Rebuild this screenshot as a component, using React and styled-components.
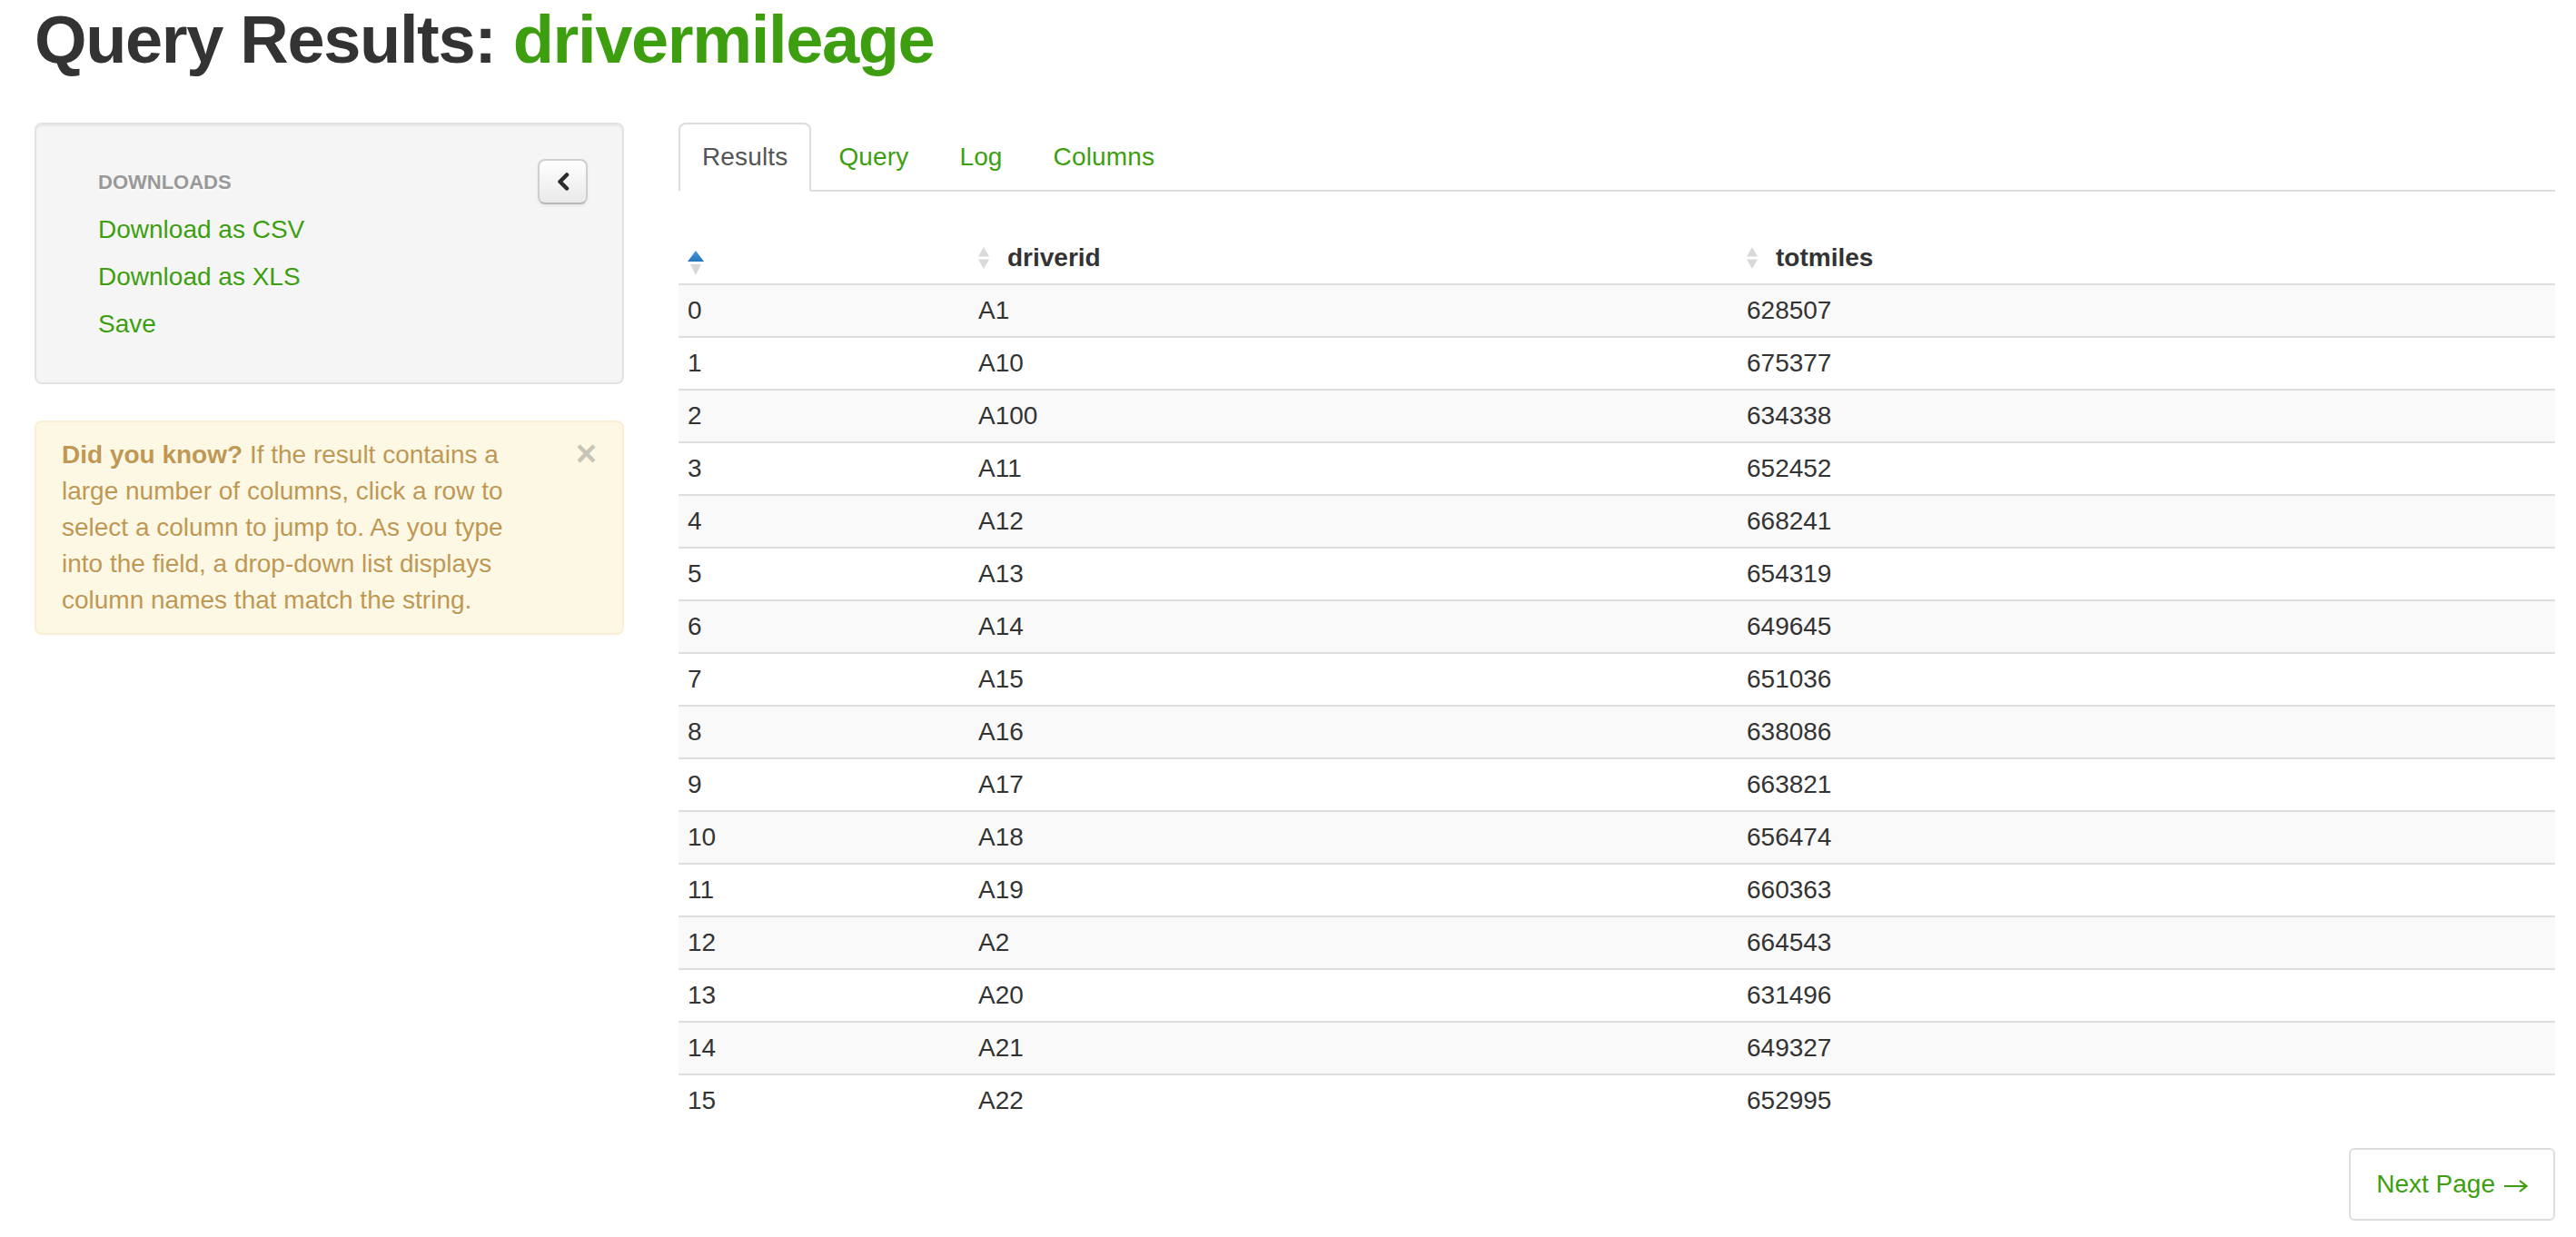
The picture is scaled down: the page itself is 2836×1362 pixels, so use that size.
import React from "react";
import styled, { createGlobalStyle } from "styled-components";

const GREEN = "#3d9f10";

const GlobalStyle = createGlobalStyle`
  body {
    margin: 0;
    background: #fff;
    color: #333;
    font-family: "Liberation Sans", Arial, sans-serif;
    font-size: 28px;
    line-height: 40px;
  }
  * { box-sizing: border-box; }
`;

const Page = styled.div`
  padding: 4px 23px 0 38px;
`;

const Title = styled.h1`
  margin: 0 0 51px;
  font-size: 74px;
  line-height: 80px;
  font-weight: bold;
  letter-spacing: -1.35px;
  color: #333;
  span { color: ${GREEN}; }
`;

const Layout = styled.div`
  display: grid;
  grid-template-columns: 649px 1fr;
  column-gap: 60px;
  align-items: start;
`;

const Sidebar = styled.div`
  display: flex;
  flex-direction: column;
  gap: 40px;
`;

const Well = styled.div`
  display: flex;
  justify-content: space-between;
  align-items: flex-start;
  padding: 38px;
  background: #f5f5f5;
  border: 2px solid #e3e3e3;
  border-radius: 8px;
  box-shadow: inset 0 2px 2px rgba(0, 0, 0, 0.05);
`;

const NavList = styled.ul`
  list-style: none;
  margin: 0;
  padding: 0;
`;

const NavHeader = styled.li`
  padding: 6px 30px;
  font-size: 22px;
  line-height: 40px;
  font-weight: bold;
  color: #999;
  text-transform: uppercase;
  text-shadow: 0 2px 0 rgba(255, 255, 255, 0.5);
`;

const NavLink = styled.a`
  display: block;
  padding: 6px 30px;
  color: ${GREEN};
  text-decoration: none;
  text-shadow: 0 2px 0 rgba(255, 255, 255, 0.5);
`;

const CollapseButton = styled.button`
  width: 55px;
  height: 50px;
  padding: 0;
  display: flex;
  align-items: center;
  justify-content: center;
  border: 2px solid #cfcfcf;
  border-bottom-color: #b8b8b8;
  border-radius: 8px;
  background: linear-gradient(#ffffff, #e9e9e9);
  box-shadow: inset 0 2px 0 rgba(255, 255, 255, 0.3), 0 2px 4px rgba(0, 0, 0, 0.06);
`;

const Alert = styled.div`
  padding: 16px 70px 16px 28px;
  background: #fcf8e3;
  border: 2px solid #fbeed5;
  border-radius: 8px;
  color: #c09853;
  text-shadow: 0 2px 0 rgba(255, 255, 255, 0.5);
  strong { font-weight: bold; }
`;

const Close = styled.span`
  float: right;
  position: relative;
  top: -2px;
  right: -42px;
  font-size: 40px;
  line-height: 40px;
  font-weight: bold;
  color: #000;
  opacity: 0.2;
  text-shadow: 0 2px 0 #fff;
`;

const Main = styled.div`
  min-width: 0;
`;

const Tabs = styled.ul`
  display: flex;
  list-style: none;
  margin: 0 0 45px;
  padding: 0;
  border-bottom: 2px solid #ddd;
`;

const TabItem = styled.li`
  margin-bottom: -2px;
`;

const TabLink = styled.a`
  display: block;
  margin-right: 4px;
  padding: 16px 24px;
  line-height: 40px;
  border: 2px solid transparent;
  border-radius: 8px 8px 0 0;
  text-decoration: none;
  letter-spacing: 0.15px;
  color: ${(p) => (p.$active ? "#555" : GREEN)};
  background: ${(p) => (p.$active ? "#fff" : "transparent")};
  border-color: ${(p) => (p.$active ? "#ddd #ddd transparent" : "transparent")};
`;

const Table = styled.table`
  width: 100%;
  border-collapse: collapse;
  border-spacing: 0;
  table-layout: fixed;
`;

const Th = styled.th`
  padding: 8px 10px;
  line-height: 40px;
  text-align: left;
  vertical-align: bottom;
  font-weight: bold;
  color: #333;
`;

const HeadCell = styled.div`
  display: flex;
  align-items: center;
  gap: 20px;
`;

const Row = styled.tr`
  background: ${(p) => (p.$odd ? "#f9f9f9" : "#fff")};
`;

const Td = styled.td`
  padding: 8px 10px;
  line-height: 40px;
  border-top: 2px solid #ddd;
  vertical-align: top;
  color: #333;
`;

const Pager = styled.div`
  display: flex;
  justify-content: flex-end;
  margin-top: 24px;
`;

const PagerLink = styled.a`
  display: inline-flex;
  align-items: center;
  gap: 9px;
  padding: 18px 28px;
  line-height: 40px;
  border: 2px solid #ddd;
  border-radius: 6px;
  background: #fff;
  color: ${GREEN};
  text-decoration: none;
`;

const SortAsc = () => (
  <svg width="18" height="28" viewBox="0 0 18 28">
    <defs>
      <linearGradient id="ascBlue" x1="0" y1="0" x2="0" y2="1">
        <stop offset="0" stopColor="#4a9be0" />
        <stop offset="1" stopColor="#2474b8" />
      </linearGradient>
    </defs>
    <polygon points="9,0 18,12 0,12" fill="url(#ascBlue)" />
    <polygon points="3,15 15,15 9,27" fill="#d8d8d8" />
  </svg>
);

const SortBoth = () => (
  <svg width="12" height="24" viewBox="0 0 12 24">
    <polygon points="6,0 12,10.5 0,10.5" fill="#d9d9d9" />
    <polygon points="0,13.5 12,13.5 6,24" fill="#d9d9d9" />
  </svg>
);

const ChevronLeft = () => (
  <svg width="14" height="20" viewBox="0 0 14 20">
    <path d="M11 2.5 L3.5 10 L11 17.5" fill="none" stroke="#2b2b2b" strokeWidth="4.5" strokeLinecap="round" strokeLinejoin="round" />
  </svg>
);

const RightArrow = () => (
  <svg width="27" height="16" viewBox="0 0 27 16" style={{ marginTop: 4 }}>
    <path d="M1 8 H25 M18 2 L25.5 8 L18 14" fill="none" stroke={GREEN} strokeWidth="2.2" strokeLinejoin="miter" />
  </svg>
);

const rows = [
  ["A1", 628507],
  ["A10", 675377],
  ["A100", 634338],
  ["A11", 652452],
  ["A12", 668241],
  ["A13", 654319],
  ["A14", 649645],
  ["A15", 651036],
  ["A16", 638086],
  ["A17", 663821],
  ["A18", 656474],
  ["A19", 660363],
  ["A2", 664543],
  ["A20", 631496],
  ["A21", 649327],
  ["A22", 652995],
];

const tabs = ["Results", "Query", "Log", "Columns"];

export default function App() {
  return (
    <>
      <GlobalStyle />
      <Page>
        <Title>
          Query Results: <span>drivermileage</span>
        </Title>
        <Layout>
          <Sidebar>
            <Well>
              <NavList>
                <NavHeader>Downloads</NavHeader>
                <li><NavLink href="#">Download as CSV</NavLink></li>
                <li><NavLink href="#">Download as XLS</NavLink></li>
                <li><NavLink href="#">Save</NavLink></li>
              </NavList>
              <CollapseButton>
                <ChevronLeft />
              </CollapseButton>
            </Well>
            <Alert>
              <Close>×</Close>
              <strong>Did you know?</strong> If the result contains a<br />
              large number of columns, click a row to<br />
              select a column to jump to. As you type<br />
              into the field, a drop-down list displays<br />
              column names that match the string.
            </Alert>
          </Sidebar>
          <Main>
            <Tabs>
              {tabs.map((t, i) => (
                <TabItem key={t}>
                  <TabLink href="#" $active={i === 0}>{t}</TabLink>
                </TabItem>
              ))}
            </Tabs>
            <Table>
              <colgroup>
                <col style={{ width: 320 }} />
                <col style={{ width: 846 }} />
                <col />
              </colgroup>
              <thead>
                <tr>
                  <Th><HeadCell><SortAsc /></HeadCell></Th>
                  <Th><HeadCell><SortBoth />driverid</HeadCell></Th>
                  <Th><HeadCell><SortBoth />totmiles</HeadCell></Th>
                </tr>
              </thead>
              <tbody>
                {rows.map(([id, miles], i) => (
                  <Row key={id} $odd={i % 2 === 0}>
                    <Td>{i}</Td>
                    <Td>{id}</Td>
                    <Td>{miles}</Td>
                  </Row>
                ))}
              </tbody>
            </Table>
            <Pager>
              <PagerLink href="#">Next Page<RightArrow /></PagerLink>
            </Pager>
          </Main>
        </Layout>
      </Page>
    </>
  );
}
